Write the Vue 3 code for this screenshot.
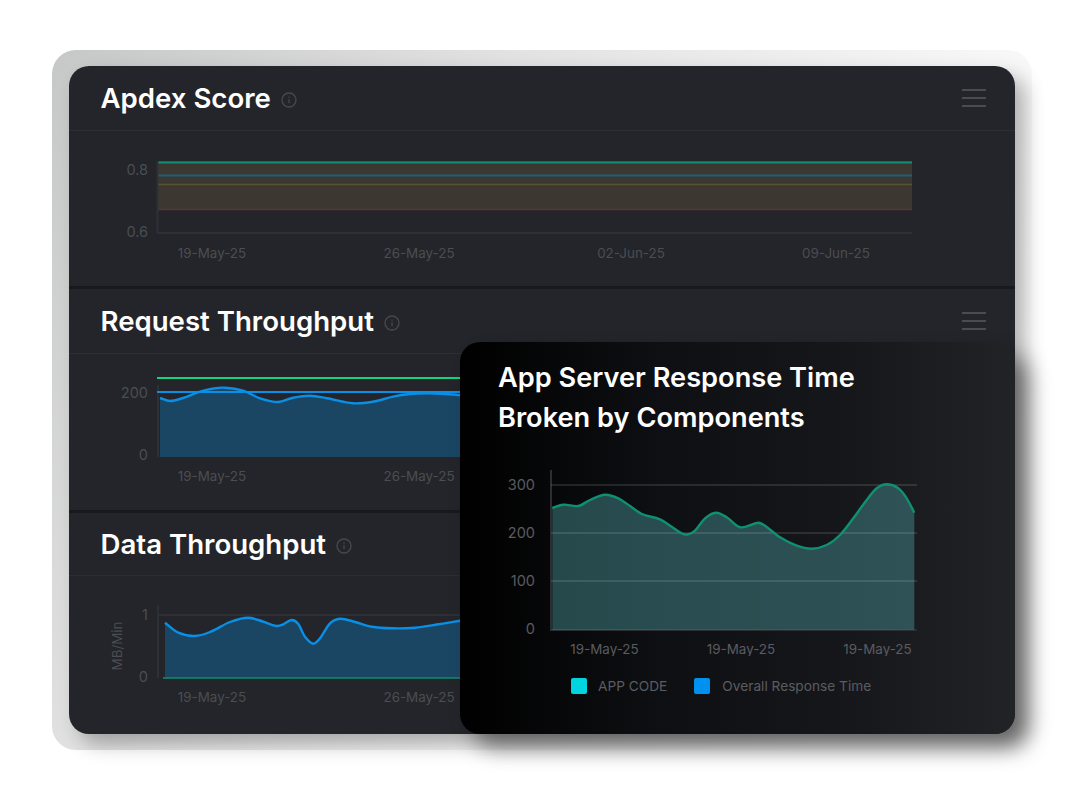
<template>
  <div class="page">
    <div class="frame">
      <div class="card">
        <!-- APDEX -->
        <section class="panel">
          <div class="panel-head">
            <h2>Apdex Score</h2>
            <svg class="info" viewBox="0 0 16 16"><circle cx="8" cy="8" r="7" /><path d="M8 7.2v4M8 4.6v1.2" /></svg>
            <div class="menu"><span></span><span></span><span></span></div>
          </div>
          <svg class="chart" width="946" height="155" viewBox="69 131 946 155">
            <rect x="157" y="161" width="755" height="49" fill="#3c3831" />
            <line x1="157" y1="162.5" x2="912" y2="162.5" stroke="#0f8f6f" stroke-width="2" />
            <line x1="157" y1="175.5" x2="912" y2="175.5" stroke="#1c5f80" stroke-width="2" />
            <line x1="157" y1="184.5" x2="912" y2="184.5" stroke="#55552f" stroke-width="1.5" />
            <line x1="157" y1="209.5" x2="912" y2="209.5" stroke="#5a3635" stroke-width="1.5" />
            <path d="M157.5 161V233H912" class="axis" />
            <text x="148" y="175" class="label tick end">0.8</text>
            <text x="148" y="237" class="label tick end">0.6</text>
            <text v-for="d in apdexDates" :x="d.x" y="258" class="label mid">{{ d.text }}</text>
          </svg>
        </section>

        <!-- REQUEST -->
        <section class="panel">
          <div class="panel-head">
            <h2>Request Throughput</h2>
            <svg class="info" viewBox="0 0 16 16"><circle cx="8" cy="8" r="7" /><path d="M8 7.2v4M8 4.6v1.2" /></svg>
            <div class="menu"><span></span><span></span><span></span></div>
          </div>
          <svg class="chart" width="946" height="156" viewBox="69 354 946 156">
            <path d="M158 385V457" class="axis" />
            <path :d="requestArea" fill="#1a4664" />
            <line x1="157" y1="378" x2="470" y2="378" stroke="#10d47f" stroke-width="2" />
            <line x1="157" y1="392" x2="470" y2="392" stroke="#0a8fe6" stroke-width="2" />
            <path :d="requestLine" class="blue-line" />
            <text x="148" y="398" class="label tick end">200</text>
            <text x="148" y="460" class="label tick end">0</text>
            <text x="212" y="481" class="label mid">19-May-25</text>
            <text x="419" y="481" class="label mid">26-May-25</text>
          </svg>
        </section>

        <!-- DATA -->
        <section class="panel last">
          <div class="panel-head">
            <h2>Data Throughput</h2>
            <svg class="info" viewBox="0 0 16 16"><circle cx="8" cy="8" r="7" /><path d="M8 7.2v4M8 4.6v1.2" /></svg>
          </div>
          <svg class="chart" width="946" height="158" viewBox="69 576 946 158">
            <path d="M158 605V678M158 615H470" class="axis" />
            <path :d="dataArea" fill="#1a4664" />
            <line x1="163" y1="678" x2="470" y2="678" stroke="#0f8f6f" stroke-width="1.5" />
            <path :d="dataLine" class="blue-line" />
            <text x="148" y="620" class="label tick end">1</text>
            <text x="148" y="682" class="label tick end">0</text>
            <text transform="translate(122 646) rotate(-90)" class="label mid">MB/Min</text>
            <text x="212" y="702" class="label mid">19-May-25</text>
            <text x="419" y="702" class="label mid">26-May-25</text>
          </svg>
        </section>

        <!-- RESPONSE TIME OVERLAY -->
        <div class="overlay">
          <h3>App Server Response Time<br />Broken by Components</h3>
          <svg class="chart" width="555" height="196" viewBox="460 460 555 196">
            <path d="M551 470V630H917" class="axis light" />
            <path :d="responseArea" fill="rgba(64, 128, 132, 0.55)" />
            <line v-for="y in [485, 533, 581]" x1="551" :y1="y" x2="917" :y2="y" class="grid" />
            <path :d="responseLine" class="green-line" />
            <text v-for="t in responseTicks" x="535" :y="t.y" class="label tick end bright">{{ t.text }}</text>
            <text v-for="x in [604.5, 741, 877.5]" :x="x" y="654" class="label mid bright">19-May-25</text>
          </svg>
          <div class="legend">
            <div class="legend-item"><i class="swatch cyan"></i>APP CODE</div>
            <div class="legend-item"><i class="swatch blue"></i>Overall Response Time</div>
          </div>
        </div>
      </div>
    </div>
  </div>
</template>

<script setup>
// cubic through the points, tangent from the two neighbours
function smooth(pts) {
  const slope = (i) => {
    const a = pts[Math.max(i - 1, 0)]
    const b = pts[Math.min(i + 1, pts.length - 1)]
    return (b[1] - a[1]) / (b[0] - a[0])
  }
  let d = `M${pts[0][0]} ${pts[0][1]}`
  for (let i = 0; i < pts.length - 1; i++) {
    const p1 = pts[i]
    const p2 = pts[i + 1]
    const dx = (p2[0] - p1[0]) / 3
    const c1y = p1[1] + slope(i) * dx
    const c2y = p2[1] - slope(i + 1) * dx
    d += `C${(p1[0] + dx).toFixed(1)} ${c1y.toFixed(1)} ${(p2[0] - dx).toFixed(1)} ${c2y.toFixed(1)} ${p2[0]} ${p2[1]}`
  }
  return d
}

function area(pts, bottom) {
  const last = pts[pts.length - 1]
  return `${smooth(pts)}L${last[0]} ${bottom}L${pts[0][0]} ${bottom}Z`
}

const apdexDates = [
  { x: 212, text: '19-May-25' },
  { x: 419, text: '26-May-25' },
  { x: 631, text: '02-Jun-25' },
  { x: 836, text: '09-Jun-25' },
]

const requestPts = [
  [160, 398], [170, 401], [183, 398], [200, 391.7], [212, 388.7], [225, 387.7], [243, 390.7], [260, 398.3], [278, 402],
  [293, 397.7], [310, 395.7], [327, 398.3], [353, 403.3], [373, 401.7], [393, 396.7], [410, 394], [427, 393.3], [445, 394], [470, 396],
]
const dataPts = [
  [165, 622.7], [178.3, 632.7], [194.3, 636], [210, 632], [230, 622], [248.3, 617.7], [263.3, 621.7], [276.7, 626],
  [283.3, 624.3], [291.7, 620], [298.3, 624], [305, 636.7], [313.3, 643.7], [320, 638.3], [330, 623.3], [340, 618.7],
  [355, 622], [371.7, 626.7], [391.7, 628.3], [415, 627.7], [438.3, 624.3], [460, 620.7], [470, 619],
]
const responsePts = [
  [552.3, 508], [563.3, 504.7], [578.3, 506], [590, 500], [605, 494.7], [618.3, 498.3], [630, 506], [641.7, 514],
  [660, 519.3], [671.7, 526.7], [681.7, 533.3], [688.3, 534.3], [695, 530.7], [705, 518.3], [716, 512.7], [726.7, 517.3],
  [740, 527.3], [758.3, 522.7], [765, 525.7], [780, 537.3], [796.7, 545.7], [811.7, 548.7], [826.7, 545], [840, 535],
  [853.3, 518.3], [866.7, 500], [876.7, 488.3], [886.7, 484.3], [898.3, 488.3], [906.7, 498.3], [914.3, 512.7],
]

const requestLine = smooth(requestPts)
const requestArea = area(requestPts, 457)
const dataLine = smooth(dataPts)
const dataArea = area(dataPts, 678)
const responseLine = smooth(responsePts)
const responseArea = area(responsePts, 630)

const responseTicks = [
  { y: 490, text: '300' },
  { y: 538, text: '200' },
  { y: 586, text: '100' },
  { y: 634, text: '0' },
]
</script>

<style>
html, body {
  background: #fff;
}
</style>

<style scoped>
.page {
  width: 1080px;
  height: 801px;
  padding: 50px 48px 0 52px;
  box-sizing: border-box;
  font-family: Inter, "Liberation Sans", sans-serif;
}

.frame {
  height: 700px;
  padding: 16px 17px;
  box-sizing: border-box;
  border-radius: 24px;
  background: linear-gradient(122deg, #c6c8c7 0%, #e2e3e2 34%, #f8f8f8 69%, #fff 85%);
}

.card {
  position: relative;
  height: 668px;
  border-radius: 20px;
  background: #23252a;
  box-shadow: 10px 10px 20px rgba(0, 0, 0, 0.3);
}

.panel {
  border-bottom: 3px solid #18191c;
}

.panel.last {
  border-bottom: 0;
}

.panel-head {
  display: flex;
  align-items: center;
  height: 64px;
  padding: 0 29px 0 32px;
  border-bottom: 1px solid #2c2e33;
}

.panel.last .panel-head {
  height: 62px;
}

h2 {
  margin: 0 0 0 -0.5px;
  font-size: 27.6px;
  font-weight: 600;
  color: #fff;
}

.info {
  width: 16px;
  height: 16px;
  margin-left: 10px;
  margin-top: 3px;
  fill: none;
  stroke: #47494e;
  stroke-width: 1.3;
}

.menu {
  margin-left: auto;
  display: flex;
  flex-direction: column;
  gap: 6px;
  width: 24px;
}

.menu span {
  height: 2px;
  background: #4a4c50;
}

.chart {
  display: block;
}

.axis {
  fill: none;
  stroke: #2e3035;
  stroke-width: 2;
}

.axis.light {
  stroke: #2c2e32;
}

.grid {
  stroke: rgba(255, 255, 255, 0.11);
  stroke-width: 2;
}

.label {
  font-size: 13.4px;
  fill: #4b4d52;
}

.label.tick {
  font-size: 14.5px;
}

.label.bright {
  fill: #5a5c60;
}

.end {
  text-anchor: end;
}

.mid {
  text-anchor: middle;
}

.blue-line {
  fill: none;
  stroke: #0a8fe6;
  stroke-width: 2.4;
}

.green-line {
  fill: none;
  stroke: #0f9070;
  stroke-width: 2.4;
}

.overlay {
  position: absolute;
  right: 0;
  bottom: 0;
  width: 555px;
  height: 392px;
  border-radius: 20px;
  background: linear-gradient(90deg, #000 0%, #0e0f12 35%, #16171b 70%, #212327 100%);
  box-shadow: 14px 14px 22px rgba(0, 0, 0, 0.45);
}

h3 {
  margin: 0;
  height: 118px;
  padding: 16px 0 0 38px;
  box-sizing: border-box;
  font-size: 27.2px;
  line-height: 40px;
  font-weight: 600;
  color: #fff;
}

.legend {
  display: flex;
  gap: 27px;
  margin-top: 22px;
  padding-left: 111px;
}

.legend-item {
  display: flex;
  align-items: center;
  font-size: 13.7px;
  color: #5a5c60;
}

.swatch {
  width: 16px;
  height: 16px;
  margin-right: 11px;
  border-radius: 2px;
}

.swatch.cyan {
  background: #00d4e0;
}

.swatch.blue {
  margin-right: 12px;
  background: #0090f0;
}
</style>
